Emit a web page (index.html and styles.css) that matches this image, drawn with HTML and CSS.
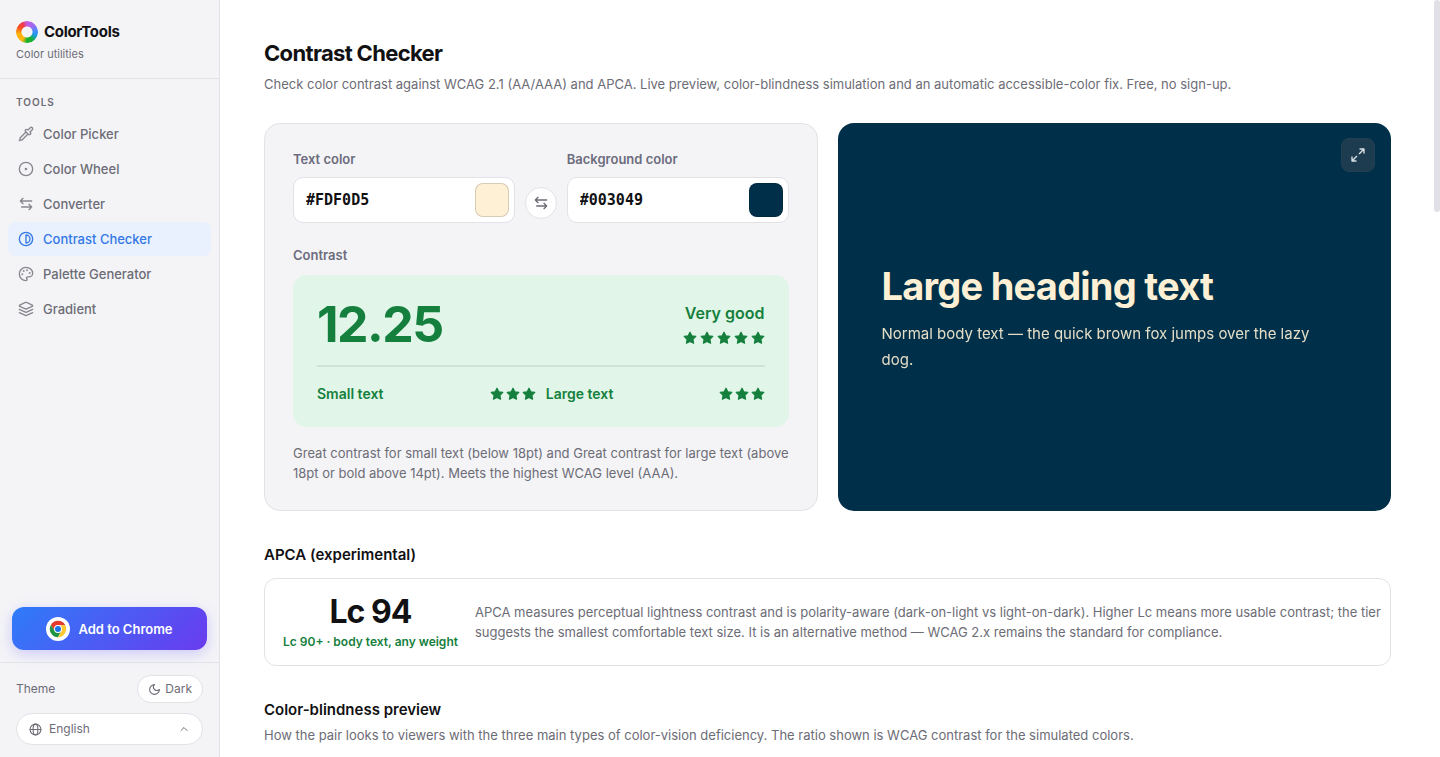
FILE: index.html
```html
<!DOCTYPE html>
<html lang="en">
<head>
<meta charset="utf-8">
<meta name="viewport" content="width=device-width, initial-scale=1">
<title>Contrast Checker – ColorTools</title>
<link rel="stylesheet" href="styles.css">
</head>
<body>
<svg class="defs" width="0" height="0" aria-hidden="true">
  <symbol id="star" viewBox="0 0 24 24"><path d="M12 2l3.1 6.3 6.9 1-5 4.9 1.2 6.8-6.2-3.2L5.8 21 7 14.200l-5-4.900 6.900-1z" fill="currentColor" stroke="currentColor" stroke-width="2" stroke-linejoin="round"/></symbol>
  <symbol id="swap" viewBox="0 0 24 24"><path d="M7.500 3.500L3.500 7.500l4 4M3.500 7.500h17M16.500 20.500l4-4-4-4M20.500 16.500h-15"/></symbol>
</svg>
<aside class="sidebar">
  <header class="brand">
    <div class="brand-row"><span class="logo"></span><span class="brand-name">ColorTools</span></div>
    <div class="brand-sub">Color utilities</div>
  </header>
  <nav class="nav">
    <div class="nav-title">Tools</div>
    <a class="nav-item" href="#picker"><svg class="icon" viewBox="0 0 24 24"><path d="M2 22l1-1h3l9-9M3 21v-3l9-9M15 6l3.400-3.400a2.100 2.100 0 1 1 3 3L18 9l.4.4a2.100 2.100 0 1 1-3 3l-3.800-3.800a2.100 2.100 0 1 1 3-3z"/></svg>Color Picker</a>
    <a class="nav-item" href="#wheel"><svg class="icon" viewBox="0 0 24 24"><circle cx="12" cy="12" r="10"/><circle cx="12" cy="12" r="1" fill="currentColor"/></svg>Color Wheel</a>
    <a class="nav-item" href="#converter"><svg class="icon"><use href="#swap"/></svg>Converter</a>
    <a class="nav-item active" href="#contrast" aria-current="page"><svg class="icon" viewBox="0 0 24 24"><circle cx="12" cy="12" r="10"/><path d="M12 18a6 6 0 0 0 0-12z"/></svg>Contrast Checker</a>
    <a class="nav-item" href="#palette"><svg class="icon" viewBox="0 0 24 24"><path d="M12 2C6.500 2 2 6.500 2 12s4.500 10 10 10c.93 0 1.650-.75 1.650-1.690 0-.44-.18-.83-.44-1.120-.29-.29-.44-.65-.44-1.130a1.640 1.640 0 0 1 1.670-1.670h2c3.050 0 5.560-2.500 5.560-5.550C21.970 6.010 17.460 2 12 2z"/><g fill="currentColor"><circle cx="13.500" cy="6.500" r=".5"/><circle cx="17.500" cy="10.500" r=".5"/><circle cx="8.500" cy="7.500" r=".5"/><circle cx="6.500" cy="12.500" r=".5"/></g></svg>Palette Generator</a>
    <a class="nav-item" href="#gradient"><svg class="icon" viewBox="0 0 24 24"><path d="M12.830 2.180a2 2 0 0 0-1.660 0L2.600 6.080a1 1 0 0 0 0 1.830l8.580 3.910a2 2 0 0 0 1.660 0l8.580-3.900a1 1 0 0 0 0-1.830zM22 12.500l-9.170 4.160a2 2 0 0 1-1.660 0L2 12.500M22 17.500l-9.170 4.160a2 2 0 0 1-1.660 0L2 17.500"/></svg>Gradient</a>
  </nav>
  <a class="chrome" href="#install"><span class="chrome-badge"><svg viewBox="0 0 48 48">
    <path d="M24 14H43.500L43.050 13A22 22 0 0 0 4.950 13L15.300 29z" fill="#e33b2e"/>
    <path d="M15.300 29L4.950 13A22 22 0 0 0 24 46L32.700 29z" fill="#229342"/>
    <path d="M32.700 29L24 46A22 22 0 0 0 43.600 14H24z" fill="#fcc934"/>
    <circle cx="24" cy="24" r="10.500" fill="#fff"/><circle cx="24" cy="24" r="8" fill="#1a73e8"/></svg></span>Add to Chrome</a>
  <footer class="side-foot">
    <div class="theme-row"><span>Theme</span><button class="theme-btn" type="button"><svg class="icon" viewBox="0 0 24 24"><path d="M12 3a6 6 0 0 0 9 9 9 9 0 1 1-9-9z"/></svg>Dark</button></div>
    <div class="lang">
      <svg class="icon" viewBox="0 0 24 24"><circle cx="12" cy="12" r="10"/><ellipse cx="12" cy="12" rx="4.500" ry="10"/><path d="M2 12h20"/></svg>
      <select aria-label="Language"><option>English</option></select>
      <svg class="icon chevron" viewBox="0 0 24 24"><path d="M6 15l6-6 6 6"/></svg>
    </div>
  </footer>
</aside>
<main class="main">
  <h1>Contrast Checker</h1>
  <p class="lead">Check color contrast against WCAG 2.1 (AA/AAA) and APCA. Live preview, color-blindness simulation and an automatic accessible-color fix. Free, no sign-up.</p>
  <div class="panels">
    <section class="card">
      <div class="fields">
        <div class="field"><label for="fg">Text color</label><div class="field-box"><input id="fg" type="text" value="#FDF0D5"><button class="swatch swatch-fg" type="button" aria-label="Pick text color"></button></div></div>
        <button class="swap" type="button" aria-label="Swap colors"><svg class="icon"><use href="#swap"/></svg></button>
        <div class="field"><label for="bg">Background color</label><div class="field-box"><input id="bg" type="text" value="#003049"><button class="swatch swatch-bg" type="button" aria-label="Pick background color"></button></div></div>
      </div>
      <div class="result-label">Contrast</div>
      <div class="result">
        <div class="result-top">
          <div class="ratio">12.25</div>
          <div class="verdict"><span>Very good</span><span class="stars stars-lg"><svg><use href="#star"/></svg><svg><use href="#star"/></svg><svg><use href="#star"/></svg><svg><use href="#star"/></svg><svg><use href="#star"/></svg></span></div>
        </div>
        <div class="result-rows">
          <div class="result-row">Small text<span class="stars"><svg><use href="#star"/></svg><svg><use href="#star"/></svg><svg><use href="#star"/></svg></span></div>
          <div class="result-row">Large text<span class="stars"><svg><use href="#star"/></svg><svg><use href="#star"/></svg><svg><use href="#star"/></svg></span></div>
        </div>
      </div>
      <p class="note">Great contrast for small text (below 18pt) and Great contrast for large text (above 18pt or bold above 14pt). Meets the highest WCAG level (AAA).</p>
    </section>
    <section class="preview">
      <button class="expand" type="button" aria-label="Full screen"><svg class="icon" viewBox="0 0 24 24"><path d="M15 3h6v6M21 3l-7 7M9 21H3v-6M3 21l7-7"/></svg></button>
      <div class="preview-title">Large heading text</div>
      <p>Normal body text — the quick brown fox jumps over the lazy dog.</p>
    </section>
  </div>
  <h2>APCA (experimental)</h2>
  <section class="apca">
    <div class="apca-score"><strong>Lc 94</strong><span>Lc 90+ · body text, any weight</span></div>
    <p>APCA measures perceptual lightness contrast and is polarity-aware (dark-on-light vs light-on-dark). Higher Lc means more usable contrast; the tier suggests the smallest comfortable text size. It is an alternative method — WCAG 2.x remains the standard for compliance.</p>
  </section>
  <h2>Color-blindness preview</h2>
  <p class="sub">How the pair looks to viewers with the three main types of color-vision deficiency. The ratio shown is WCAG contrast for the simulated colors.</p>
</main>
<div class="scrollbar" aria-hidden="true"><div class="thumb"></div></div>
</body>
</html>
```

FILE: styles.css
```css
* { box-sizing: border-box; }
body {
  margin: 0;
  height: 100vh;
  overflow: hidden;
  display: flex;
  background: #fff;
  color: #111113;
  font: 13px/20px Inter, "Liberation Sans", sans-serif;
}
h1, h2, p { margin: 0; }
button, input, select { font: inherit; color: inherit; }
a { text-decoration: none; }
.defs { position: absolute; }
.icon {
  width: 16px;
  height: 16px;
  flex: none;
  fill: none;
  stroke: currentColor;
  stroke-width: 2;
  stroke-linecap: round;
  stroke-linejoin: round;
}

/* Sidebar */
.sidebar {
  width: 220px;
  flex: none;
  display: flex;
  flex-direction: column;
  background: #f4f4f7;
  border-right: 1px solid #e2e2e7;
  color: #6c6c76;
}
.brand { padding: 21px 16px 16px; border-bottom: 1px solid #e2e2e7; }
.brand-row { display: flex; align-items: center; gap: 6px; height: 22px; }
.logo {
  width: 22px;
  height: 22px;
  border-radius: 50%;
  background: conic-gradient(#c45be0, #a06af0 45deg, #4b8bfa 80deg, #1a9be8 110deg, #18b22c 150deg, #18b22c 180deg, #fbb70c 210deg, #fdb00c 260deg, #f8501f 300deg, #f43a44 330deg, #c45be0);
  -webkit-mask: radial-gradient(circle, transparent 5px, #000 6px);
  mask: radial-gradient(circle, transparent 5px, #000 6px);
}
.brand-name { font-size: 15px; font-weight: 700; color: #111113; letter-spacing: -0.02em; }
.brand-sub { margin-top: 3px; font-size: 11px; line-height: 16px; }
.nav { display: flex; flex-direction: column; gap: 1px; padding: 15px 8px; flex: 1; }
.nav-title {
  padding: 0 8px;
  margin-bottom: 6px;
  font-size: 10px;
  line-height: 16px;
  font-weight: 600;
  letter-spacing: 0.1em;
  text-transform: uppercase;
}
.nav-item {
  display: flex;
  align-items: center;
  gap: 9px;
  padding: 7px 10px;
  border-radius: 8px;
  color: #6c6c76;
  font-weight: 500;
}
.nav-item .icon { opacity: 0.8; }
.nav-item.active .icon { opacity: 1; }
.nav-item.active { background: #e8f1fd; color: #3478e5; }
.chrome {
  margin: 0 12px 12px;
  height: 43px;
  flex: none;
  display: flex;
  align-items: center;
  justify-content: center;
  gap: 8px;
  border-radius: 12px;
  background: linear-gradient(135deg, #2e7cf9, #6a3bee);
  box-shadow: 0 4px 14px rgba(91, 80, 250, 0.25);
  color: #fff;
  font-weight: 600;
}
.chrome-badge {
  width: 24px;
  height: 24px;
  padding: 3px;
  border-radius: 50%;
  background: #fff;
}
.chrome-badge svg { display: block; }
.side-foot {
  display: flex;
  flex-direction: column;
  gap: 10px;
  padding: 12px 16px;
  border-top: 1px solid #e2e2e7;
  font-size: 12px;
}
.theme-row { display: flex; align-items: center; justify-content: space-between; }
.theme-btn {
  height: 28px;
  display: flex;
  align-items: center;
  gap: 4px;
  padding: 0 10px;
  border: 1px solid #e2e2e7;
  border-radius: 14px;
  background: #fff;
}
.theme-btn .icon { width: 13px; height: 13px; }
.lang {
  display: flex;
  align-items: center;
  gap: 7px;
  height: 32px;
  padding: 0 12px;
  border: 1px solid #e2e2e7;
  border-radius: 16px;
  background: #fff;
}
.lang .icon { width: 13px; height: 13px; }
.lang .chevron { width: 12px; height: 12px; }
.lang select {
  flex: 1;
  padding: 0;
  border: 0;
  background: none;
  appearance: none;
  outline: none;
}

/* Main column */
.main { flex: 1; min-width: 0; padding: 39px 43px 0 44px; overflow: hidden; }
h1 { font-size: 22px; line-height: 28px; font-weight: 700; letter-spacing: -0.03em; }
.lead { margin-top: 7px; color: #6c6c76; }
.panels {
  display: grid;
  grid-template-columns: repeat(2, minmax(0, 1fr));
  gap: 20px;
  margin: 29px 0 34px;
}
.card { padding: 28px 24px 27px 28px; border: 1px solid #e2e2e7; border-radius: 16px; background: #f4f4f7; }
.fields { display: flex; align-items: flex-end; gap: 10px; margin-right: 4px; }
.field { flex: 1; min-width: 0; }
.field label, .result-label { display: block; line-height: 15px; font-weight: 600; color: #6c6c7c; }
.field-box {
  display: flex;
  align-items: center;
  height: 46px;
  margin-top: 10px;
  padding: 0 5px 0 12px;
  border: 1px solid #e2e2e7;
  border-radius: 10px;
  background: #fff;
}
.field-box input {
  flex: 1;
  min-width: 0;
  padding: 0;
  border: 0;
  outline: none;
  background: none;
  font-family: "DejaVu Sans Mono", "Liberation Mono", monospace;
  font-size: 15px;
  font-weight: 700;
}
.swatch { width: 34px; height: 34px; padding: 0; border: 1px solid rgba(0, 0, 0, 0.15); border-radius: 8px; }
.swatch-fg { background: #fdf0d5; }
.swatch-bg { background: #003049; }
.swap {
  width: 32px;
  height: 32px;
  margin-bottom: 4px;
  display: grid;
  place-items: center;
  padding: 0;
  border: 1px solid #e2e2e7;
  border-radius: 50%;
  background: #fff;
  color: #6c6c76;
}
.result-label { margin: 25px 0 12px; }
.result { margin-right: 4px; padding: 24px 24px 23px; border-radius: 14px; background: #e1f6e8; color: #15803d; font-weight: 600; }
.result-top { display: flex; align-items: center; justify-content: space-between; padding-bottom: 16px; border-bottom: 2px solid #cfe3d6; }
.ratio { font-size: 50px; line-height: 50px; font-weight: 700; letter-spacing: -0.03em; }
.verdict { display: flex; flex-direction: column; align-items: flex-end; gap: 8px; font-size: 16px; }
.stars { display: flex; gap: 2px; }
.stars svg { width: 14px; height: 14px; }
.stars-lg { gap: 3px; }
.result-rows { display: grid; grid-template-columns: 1fr 1fr; gap: 10px; padding-top: 17px; font-size: 14px; }
.result-row { display: flex; align-items: center; justify-content: space-between; }
.note { margin-top: 16px; color: #6c6c76; }
.preview {
  position: relative;
  display: flex;
  flex-direction: column;
  justify-content: center;
  padding: 46px 60px 44px 44px;
  border-radius: 16px;
  background: #003049;
  color: #fdf0d5;
}
.preview-title { font-size: 38px; line-height: 44px; font-weight: 700; letter-spacing: -0.02em; }
.preview p { margin-top: 13px; font-size: 15px; line-height: 26px; opacity: 0.9; }
.expand {
  position: absolute;
  top: 15px;
  right: 16px;
  width: 34px;
  height: 34px;
  display: grid;
  place-items: center;
  padding: 0;
  border: 1px solid #223f52;
  border-radius: 8px;
  background: #1e3c50;
  color: #d9e0e4;
}
h2 { font-size: 15px; line-height: 20px; font-weight: 600; }
.apca {
  display: flex;
  align-items: center;
  gap: 17px;
  margin: 13px 0 34px;
  padding: 15px 8px 15px 18px;
  border: 1px solid #e2e2e7;
  border-radius: 12px;
}
.apca-score { flex: none; text-align: center; }
.apca-score strong { display: block; font-size: 32px; line-height: 36px; font-weight: 700; letter-spacing: -0.03em; }
.apca-score span { display: block; margin-top: 4px; font-size: 12px; line-height: 16px; font-weight: 600; color: #15803d; }
.apca p { color: #6c6c76; }
.sub { margin-top: 5px; color: #6c6c76; }

/* Scroll indicator */
.scrollbar { width: 6px; flex: none; }
.thumb { height: 28%; border-radius: 3px; background: #e0e0e6; }
```
